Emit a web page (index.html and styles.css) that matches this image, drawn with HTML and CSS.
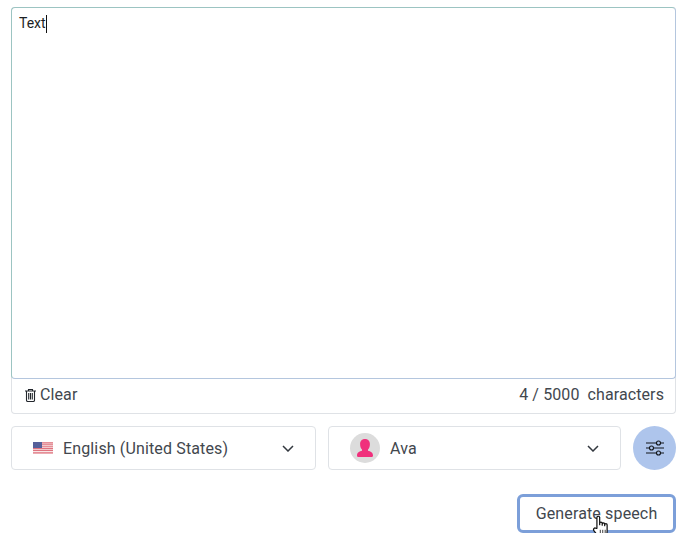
FILE: index.html
```html
<!DOCTYPE html>
<html lang="en">
<head>
    <meta charset="UTF-8">
    <meta name="viewport" content="width=device-width, initial-scale=1.0">
    <title>Text to Speech</title>
    <link rel="stylesheet" href="styles.css">
</head>
<body>
    <div class="container">
        <div class="text-box">
            <div class="text-area"><span>Text</span><span class="caret"></span></div>
            <div class="text-footer">
                <div class="clear">
                    <svg class="trash" width="13" height="14" viewBox="0 0 13 14" fill="none" stroke="#22262c" stroke-width="1.100">
                        <path d="M1 3h11M4.500 3V1.500h4V3M2.500 3v9.200q0 1.300 1.300 1.300h5.400q1.300 0 1.300-1.300V3M4.700 5v6.500M6.500 5v6.500M8.300 5v6.500"/>
                    </svg>
                    <span>Clear</span>
                </div>
                <div class="count"><span>4 / 5000</span><span>characters</span></div>
            </div>
        </div>

        <div class="options">
            <div class="select select-lang">
                <svg class="flag" width="20" height="12" viewBox="0 0 20 12">
                    <rect width="20" height="12" fill="#f7e6e6"/>
                    <path d="M0 .9h20M0 2.800h20M0 4.700h20M0 6.600h20M0 8.500h20M0 10.900h20" stroke="#e0737f" stroke-width="1.100"/>
                    <rect width="9" height="6" fill="#56609a"/>
                </svg>
                <span class="select-label">English (United States)</span>
                <svg class="chevron" width="12" height="7" viewBox="0 0 12 7" fill="none" stroke="#33383f" stroke-width="1.500"><path d="M1 1l5 5 5-5"/></svg>
            </div>
            <div class="select select-voice">
                <div class="avatar">
                    <svg width="16" height="19" viewBox="0 0 16 19" fill="#f0307c">
                        <path d="M8 0c3.300 0 4.900 2.300 4.900 5 0 2.300-.6 4.300-1.900 5.600v1.200c2.500.6 5 1.800 5 4.700 0 1-.7 1.500-1.700 1.500H1.700C.7 18 0 17.500 0 16.500c0-2.900 2.500-4.100 5-4.700v-1.200C3.700 9.300 3.100 7.300 3.100 5 3.100 2.300 4.700 0 8 0z"/>
                    </svg>
                </div>
                <span class="select-label">Ava</span>
                <svg class="chevron" width="12" height="7" viewBox="0 0 12 7" fill="none" stroke="#33383f" stroke-width="1.500"><path d="M1 1l5 5 5-5"/></svg>
            </div>
            <div class="settings">
                <svg width="18" height="16" viewBox="0 0 18 16" fill="none" stroke="#111418" stroke-width="1.100">
                    <path d="M0 3h10.500M14.500 3H18M0 8h3.500M7.500 8H18M0 13h10.500M14.500 13H18"/>
                    <circle cx="12.500" cy="3" r="2"/>
                    <circle cx="5.500" cy="8" r="2"/>
                    <circle cx="12.500" cy="13" r="2"/>
                </svg>
            </div>
        </div>

        <div class="actions">
            <button class="generate" type="button">Generate speech</button>
            <svg class="hand" width="18" height="24" viewBox="1 0 15 23.500" fill="#fff" stroke="#111" stroke-width="1.200" stroke-linejoin="round">
                <path d="M4.500 13V2.500C4.500.8 7.200.8 7.200 2.500V9.500V8c0-1.500 2.500-1.500 2.500 0v2V8.800c0-1.400 2.400-1.400 2.400 0v1.700-1c0-1.300 2.400-1.300 2.400 0V16c0 2.500-.9 4-1.800 5.200-.8 1.200-2.100 1.800-3.400 1.800-1.700 0-3-.6-4-1.800C5 19.500 3 17.500 1.500 15.300.5 13.700 2.300 12 3.500 13.100z"/>
                <path d="M7.800 14.500v4M10.200 14.500v4M12.600 14.500v4" fill="none" stroke-width=".8"/>
            </svg>
        </div>
    </div>
</body>
</html>
```

FILE: styles.css
```css
body {
    font-family: Roboto, "Liberation Sans", sans-serif;
    margin: 0;
    padding: 0;
    background: #fff;
    color: #42474e;
}
.container {
    width: 665px;
    margin-left: 11px;
    padding-top: 7px;
}
.text-box {
    border: 1px solid #dfe2e6;
    border-top: none;
    border-radius: 4px;
    height: 407px;
    box-sizing: border-box;
    display: flex;
    flex-direction: column;
}
.text-area {
    height: 372px;
    flex: none;
    margin: 0 -1px;
    border: 1px solid #9cc4c2;
    border-bottom-color: #b4c6de;
    border-right-color: #b4c6de;
    border-radius: 4px;
    padding: 6px 7px;
    font-size: 14px;
    line-height: 19px;
    color: #1c1f24;
    box-sizing: border-box;
}
.caret {
    display: inline-block;
    width: 1px;
    height: 18px;
    background: #111;
    vertical-align: top;
    margin-top: 1px;
}
.text-footer {
    flex: 1;
    display: flex;
    justify-content: space-between;
    align-items: center;
    padding: 0 11px 3px 12px;
    font-size: 16px;
    letter-spacing: .1px;
}
.clear {
    display: flex;
    align-items: center;
    gap: 3px;
}
.count {
    display: flex;
    gap: 8px;
}
.options {
    display: flex;
    gap: 12px;
    margin-top: 12px;
}
.select {
    height: 44px;
    box-sizing: border-box;
    border: 1px solid #dfe2e6;
    border-radius: 4px;
    display: flex;
    align-items: center;
    font-size: 16px;
    letter-spacing: .14px;
}
.select-lang {
    width: 305px;
    padding: 0 21px;
}
.select-voice {
    width: 293px;
    padding: 0 21px;
}
.select-label {
    flex: 1;
}
.flag {
    margin-right: 10px;
}
.avatar {
    width: 30px;
    height: 30px;
    border-radius: 50%;
    background: #dcdcdc;
    margin-right: 10px;
    display: flex;
    align-items: center;
    justify-content: center;
}
.settings {
    width: 43px;
    height: 44px;
    border-radius: 50%;
    background: #aec5ec;
    display: flex;
    align-items: center;
    justify-content: center;
}
.actions {
    display: flex;
    justify-content: flex-end;
    margin-top: 24px;
    position: relative;
}
.generate {
    width: 159px;
    height: 39px;
    box-sizing: border-box;
    background: #fff;
    border: 3px solid #7c9fd9;
    border-radius: 6px;
    font-family: Roboto, "Liberation Sans", sans-serif;
    font-size: 16px;
    letter-spacing: .14px;
    color: #42474e;
    padding: 0;
}
.hand {
    position: absolute;
    left: 581px;
    top: 21px;
}
```
